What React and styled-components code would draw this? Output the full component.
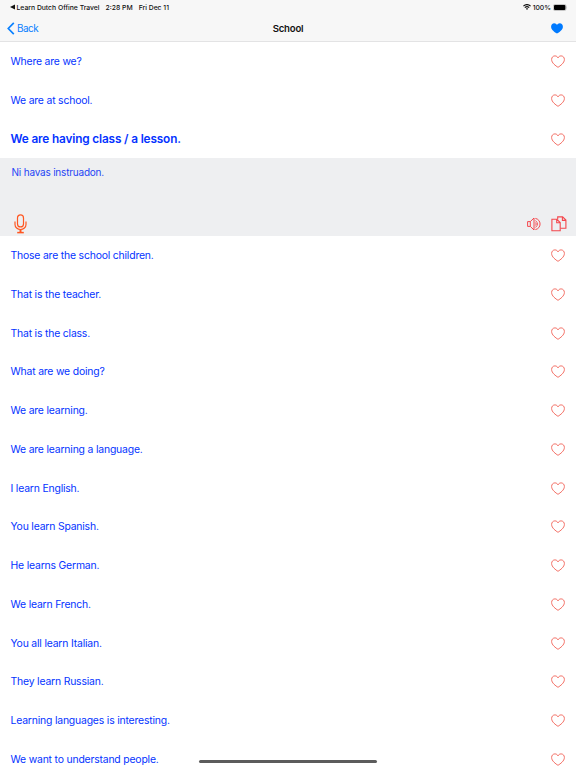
import React from "react";
import styled, { createGlobalStyle } from "styled-components";

const phrases = [
  { text: "Where are we?" },
  { text: "We are at school." },
  { text: "We are having class / a lesson.", translation: "Ni havas instruadon." },
  { text: "Those are the school children." },
  { text: "That is the teacher." },
  { text: "That is the class." },
  { text: "What are we doing?" },
  { text: "We are learning." },
  { text: "We are learning a language." },
  { text: "I learn English." },
  { text: "You learn Spanish." },
  { text: "He learns German." },
  { text: "We learn French." },
  { text: "You all learn Italian." },
  { text: "They learn Russian." },
  { text: "Learning languages is interesting." },
  { text: "We want to understand people." },
];

const HeartOutline = () => (
  <svg width="14" height="13" viewBox="0 0 14 13">
    <path
      d="M7 12.3C4.8 10.9.6 8 .6 4.5.6 2.3 2.1.9 3.9.9 5.4.9 6.5 1.7 7 2.9 7.5 1.7 8.6.9 10.1.9c1.8 0 3.3 1.4 3.3 3.6 0 3.5-4.2 6.4-6.4 7.8Z"
      fill="none"
      stroke="#f2695f"
      strokeWidth="0.95"
    />
  </svg>
);

const HeartSolid = () => (
  <svg width="12" height="11" viewBox="0 0 12 11">
    <path
      d="M6 10.6C3.8 9.2.1 6.900.1 3.700.1 1.600 1.500.3 3.200.3 4.500.3 5.500 1 6 2 6.500 1 7.500.3 8.800.3c1.700 0 3.100 1.300 3.100 3.400C11.900 6.900 8.200 9.200 6 10.600Z"
      fill="#007aff"
    />
  </svg>
);

const Mic = () => (
  <svg width="13" height="20" viewBox="0 0 13 20" fill="none" stroke="#ff5722" strokeWidth="1.2">
    <rect x="3.5" y="0.9" width="6" height="12" rx="3" />
    <path d="M1 7.5v3a5.5 5 0 0 0 11 0v-3" />
    <path d="M6.5 15.5v3" strokeWidth="2" />
    <path d="M3.2 18.6h6.6" strokeWidth="1.5" />
  </svg>
);

const Speaker = () => (
  <svg width="14" height="14" viewBox="0 0 14 14" fill="none" stroke="#f4474d" strokeWidth="1">
    <path d="M.6 4.6h2.700v4.800H.6ZM3.300 4.600 7 1v12L3.300 9.400" />
    <path d="M8.400 1.400c6.200 1.200 6.200 10 0 11.200" />
    <path d="M8.400 3.500q4.200 3.500 0 7M8.400 5.500q1.800 1.500 0 3" strokeWidth="0.9" />
  </svg>
);

const Pages = () => (
  <svg width="16" height="16" viewBox="0 0 16 16" fill="none" stroke="#f4474d" strokeWidth="1.1">
    <path d="M6.7 3.500V.9h4.900l3.300 3.200v8.200H9.500M11.400.9v3.500h3.500" />
    <path d="M.9 3.300h4.900l3.400 3.300v8.200H.9ZM5.700 3.300v3.500h3.500" />
  </svg>
);

const App = () => {
  return (
    <Screen>
      <GlobalStyle />
      <Header>
        <StatusBar>
          <StatusGroup>
            <svg width="5" height="6" viewBox="0 0 5 6">
              <path d="M5 .4v5.200L0 3Z" fill="#111" />
            </svg>
            <AppName>Learn Dutch Offine Travel</AppName>
            <Time>2:28 PM</Time>
            <span>Fri Dec 11</span>
          </StatusGroup>
          <StatusGroup>
            <svg width="8" height="6" viewBox="0 0 8 6" fill="none" stroke="#111" strokeWidth="1.2">
              <path d="M.4 2.1q3.600-3 7.200 0M1.800 3.600q2.200-1.800 4.400 0" />
              <path d="m4 5.900-1.200-1.300q1.200-.8 2.400 0Z" fill="#111" stroke="none" />
            </svg>
            <Percent>100%</Percent>
            <svg width="15" height="7" viewBox="0 0 15 7">
              <rect x="0.3" y="0.5" width="12.8" height="6" rx="1.6" fill="#eee" stroke="#999" strokeWidth="0.5" />
              <rect x="1" y="1.1" width="11.4" height="4.8" rx="1" fill="#000" />
              <path d="M13.700 2.600q.8.900 0 1.800Z" fill="#999" />
            </svg>
          </StatusGroup>
        </StatusBar>
        <NavBar>
          <BackButton>
            <svg width="8" height="13" viewBox="0 0 8 13" fill="none">
              <path d="M6.800.9 1.300 6.500l5.500 5.600" stroke="#0a80ff" strokeWidth="1.7" />
            </svg>
            Back
          </BackButton>
          <Title>School</Title>
          <NavAction>
            <HeartSolid />
          </NavAction>
        </NavBar>
      </Header>
      <List>
        {phrases.map(({ text, translation }) => (
          <li key={text}>
            <Row>
              <Phrase $active={Boolean(translation)}>{text}</Phrase>
              <HeartOutline />
            </Row>
            {translation && (
              <Panel>
                <Translation>{translation}</Translation>
                <Tools>
                  <Mic />
                  <ToolGroup>
                    <Speaker />
                    <Pages />
                  </ToolGroup>
                </Tools>
              </Panel>
            )}
          </li>
        ))}
      </List>
      <HomeIndicator />
    </Screen>
  );
};

const GlobalStyle = createGlobalStyle`
  * {
    box-sizing: border-box;
  }
  body {
    margin: 0;
    font-family: Inter, "Liberation Sans", sans-serif;
    background: #fff;
  }
  svg {
    display: block;
    flex-shrink: 0;
  }
`;

const Screen = styled.div`
  position: relative;
  width: 576px;
  height: 768px;
  overflow: hidden;
  background: #fff;
`;

const Header = styled.header`
  height: 42.1px;
  background: #f7f7f7;
  border-bottom: 1px solid #e3e3e4;
`;

const StatusBar = styled.div`
  display: flex;
  justify-content: space-between;
  height: 14px;
  padding: 0 8px 0 9.5px;
  font-size: 6.8px;
  font-weight: 500;
  color: #111;
  white-space: nowrap;
`;

const StatusGroup = styled.div`
  display: flex;
  align-items: center;
`;

const AppName = styled.span`
  margin: 0 6px 0 2px;
`;

const Time = styled.span`
  margin-right: 6px;
`;

const Percent = styled.span`
  margin: 0 2px;
`;

const NavBar = styled.nav`
  display: grid;
  grid-template-columns: 1fr auto 1fr;
  align-items: center;
  height: 28px;
  padding: 0 13px 0 7px;
`;

const BackButton = styled.button`
  display: flex;
  align-items: center;
  gap: 2px;
  padding: 0;
  border: none;
  background: none;
  font-family: inherit;
  font-size: 9.9px;
  letter-spacing: -0.5px;
  color: #0a80ff;
`;

const Title = styled.h1`
  margin: 0 0 0 6px;
  font-size: 9.6px;
  font-weight: 600;
  letter-spacing: -0.2px;
  color: #111;
`;

const NavAction = styled.div`
  justify-self: end;
`;

const List = styled.ul`
  margin: 0;
  padding: 0;
  list-style: none;
`;

const Row = styled.div`
  display: flex;
  align-items: center;
  justify-content: space-between;
  height: 38.77px;
  padding: 0.5px 11.5px 0 10.5px;
`;

const Phrase = styled.span`
  font-size: ${({ $active }) => ($active ? "11.8px" : "10.4px")};
  font-weight: ${({ $active }) => ($active ? 600 : 400)};
  letter-spacing: ${({ $active }) => ($active ? "-0.15px" : "-0.18px")};
  color: #0433ff;
`;

const Panel = styled.div`
  display: flex;
  flex-direction: column;
  justify-content: space-between;
  height: 77.5px;
  padding: 7px 9px 2.3px 11.5px;
  background: #eeeff1;
`;

const Translation = styled.span`
  font-size: 10px;
  line-height: 14px;
  letter-spacing: -0.2px;
  color: #1f45f5;
`;

const Tools = styled.div`
  display: flex;
  align-items: center;
  justify-content: space-between;
  padding-left: 2.5px;
`;

const ToolGroup = styled.div`
  display: flex;
  align-items: center;
  gap: 10px;
`;

const HomeIndicator = styled.div`
  position: absolute;
  left: 199px;
  bottom: 5px;
  width: 178px;
  height: 3px;
  border-radius: 2px;
  background: #5c5c5c;
`;

export default App;
